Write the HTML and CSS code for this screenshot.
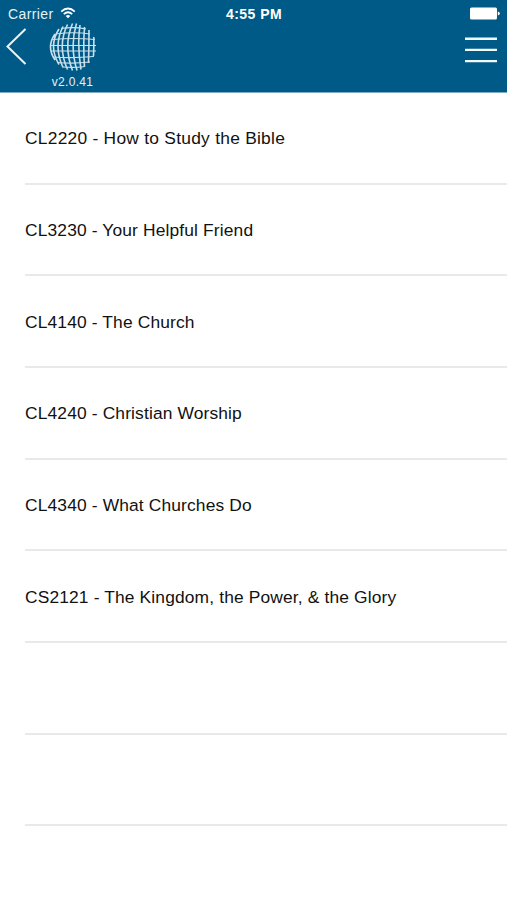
FILE: index.html
```html
<!DOCTYPE html>
<html lang="en">
<head>
<meta charset="utf-8">
<title>Courses</title>
<link rel="stylesheet" href="styles.css">
</head>
<body>
<header class="header">
  <div class="status">
    <div class="carrier"><span class="carrier-name">Carrier</span>
      <svg class="wifi" width="16" height="12" viewBox="0 0 16 12" fill="none" stroke="#fff" stroke-width="1.8"><path d="M1.2 4.6Q8-1.7 14.8 4.6M3.8 7.2Q8 3.4 12.2 7.2"/><path d="M5.7 8.9Q8 7 10.3 8.9L8 11.3Z" fill="#fff" stroke="none"/></svg>
    </div>
    <span class="time">4:55 PM</span>
    <svg class="battery" width="31" height="13" viewBox="0 0 31 13" fill="#fff"><rect x="1" y=".5" width="27" height="12" rx="1.5"/><path d="M28.8 4.5q2 .3 2 2t-2 2z"/></svg>
  </div>
  <nav class="nav">
    <svg class="back" width="22" height="38" viewBox="0 0 22 38" fill="none" stroke="#e9f4fa" stroke-width="2"><path d="M20.5 2 2.500 19.500 20.500 37"/></svg>
    <div class="brand">
      <svg class="globe" width="48" height="48" viewBox="0 0 48 48" fill="none" stroke="#c9e1ed">
        <g stroke-width="1.600"><path d="M6 11Q-3 24 6 37M10 6Q-1 23 10 41.500M14 3.500Q4 23 14 44.500M18.500 1.500Q8 23 18.500 46.500M23.500 .5Q14 23 23.500 47.500M27.500 .5Q20.500 23 28 47.500M31 2Q28 23 32 46.500M35.500 4Q34 23 35.500 44M40 7Q40 23 39.500 40M44.800 14Q45 23 44.500 33"/></g>
        <g stroke-width="1.100"><path d="M12 5.500Q25 3.500 37 6M7 11Q25 8.500 41 11M4 16.500Q24 14.500 46 16.500M2 22.500H47M2 28H47M4 34Q24 35.500 45 33.500M8 39.500Q25 41 41 39M14 44Q25 45 36 43.500"/></g>
      </svg>
      <span class="version">v2.0.41</span>
    </div>
    <svg class="menu" width="32" height="27" viewBox="0 0 32 27" fill="#f2f9fc"><path d="M0 .5h32v2.400H0zM0 11.700h32v2.400H0zM0 22.900h32v2.400H0z"/></svg>
  </nav>
</header>
<main class="list">
  <div class="row"><span class="wide">CL2220 - How to Study the Bible</span></div>
  <div class="row"><span>CL3230 - Your Helpful Friend</span></div>
  <div class="row"><span>CL4140 - The Church</span></div>
  <div class="row"><span>CL4240 - Christian Worship</span></div>
  <div class="row"><span>CL4340 - What Churches Do</span></div>
  <div class="row"><span>CS2121 - The Kingdom, the Power, &amp; the Glory</span></div>
  <div class="row"></div>
  <div class="row"></div>
</main>
</body>
</html>
```
FILE: styles.css
```css
* { box-sizing: border-box; }
body {
  margin: 0;
  height: 900px;
  overflow: hidden;
  background: #fff;
  color: #111;
  font-family: "Liberation Sans", Arial, sans-serif;
}
svg { display: block; flex: none; }
.header {
  height: 93px;
  background: #005a87;
  border-bottom: 1px solid #7faac2;
  color: #fff;
}
.status {
  display: grid;
  grid-template-columns: 1fr auto 1fr;
  height: 23px;
  padding: 7px 7px 0 8px;
  align-items: start;
}
.carrier { display: flex; gap: 6px; font-size: 14px; line-height: 15px; letter-spacing: 0.4px; color: #e5f1f7; }
.time { font-size: 14px; line-height: 15px; font-weight: bold; letter-spacing: 0.45px; }
.battery { justify-self: end; }
.nav { display: flex; align-items: flex-start; padding: 0 10px 0 5px; }
.back { margin-top: 4px; }
.brand { display: flex; flex-direction: column; align-items: center; margin-left: 22px; width: 48px; }
.version { margin: 4px 1px 0 0; font-size: 12px; line-height: 14px; letter-spacing: 0.3px; white-space: nowrap; color: #e5f1f7; }
.menu { margin: 14px 0 0 auto; }
.list { padding-left: 25px; }
.row {
  display: flex;
  align-items: center;
  height: 91.67px;
  padding-top: 2px;
  border-bottom: 2px solid #e9e9e9;
  font-size: 17.4px;
  letter-spacing: 0.14px;
  white-space: nowrap;
}
.wide { letter-spacing: 0.25px; }
```
